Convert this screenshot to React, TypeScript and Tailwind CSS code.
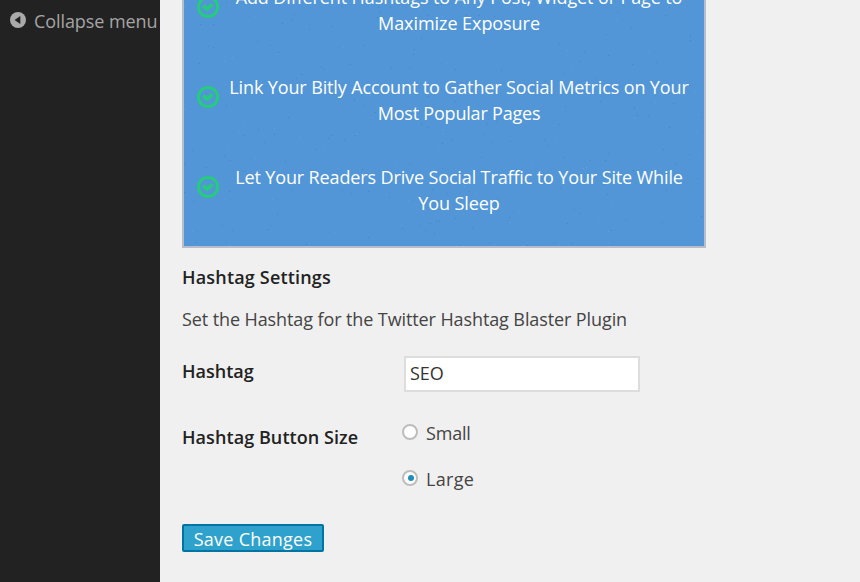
const features = [
  [
    { text: "Add Different Hashtags to Any Post, Widget or Page to", className: "tracking-[-0.11px]" },
    { text: "Maximize Exposure", className: "tracking-[-0.06px]" },
  ],
  [
    { text: "Link Your Bitly Account to Gather Social Metrics on Your", className: "tracking-[-0.13px]" },
    { text: "Most Popular Pages", className: "tracking-[-0.2px]" },
  ],
  [
    { text: "Let Your Readers Drive Social Traffic to Your Site While", className: "tracking-[-0.13px]" },
    { text: "You Sleep", className: "tracking-[-0.1px]" },
  ],
];

const specks = Array.from({ length: 260 }, (_, i) => ({
  x: Math.floor((((Math.sin(i * 12.9898) * 43758.5453) % 1) + 1) * 520) % 520,
  y: Math.floor((((Math.sin(i * 78.233 + 4) * 24634.6345) % 1) + 1) * 246) % 246,
  dark: i % 3 !== 0,
}));

function Check() {
  return (
    <svg viewBox="0 0 24 24" className="size-6 shrink-0" fill="none" stroke="#25cc7c">
      <circle cx="12" cy="12" r="9.6" strokeWidth="3" />
      <path d="M7.2 10.8 11 14 16.6 9.4" strokeWidth="3.8" />
    </svg>
  );
}

function Radio({ label, checked, className }: { label: string; checked?: boolean; className: string }) {
  return (
    <label className="flex h-[26px] items-center">
      <span className="mb-[3px] flex size-4 items-center justify-center rounded-full border-2 border-[#bdbdbd] bg-white">
        {checked && <span className="mt-px ml-px size-1.5 rounded-full bg-[#1e8cbe]" />}
      </span>
      <span className={`ml-2 ${className}`}>{label}</span>
    </label>
  );
}

export default function App() {
  return (
    <div className="flex h-[582px] w-[860px] overflow-hidden bg-[#f0f0f0] font-['Open_Sans',sans-serif] text-[18px] leading-[26px] whitespace-nowrap text-[#444]">
      <aside className="w-40 shrink-0 bg-[#222] pt-2 text-[#a5a5a5]">
        <div className="flex h-[26px] items-center pl-2.5">
          <svg viewBox="0 0 16 16" className="mb-0.5 size-4 shrink-0">
            <circle cx="8" cy="8" r="8" fill="#aaa" />
            <path d="M10.3 4v8L4.6 8z" fill="#222" />
          </svg>
          <span className="ml-2 tracking-[-0.08px]">Collapse menu</span>
        </div>
      </aside>
      <main className="flex w-[700px] flex-col pl-[22px]">
        <section className="flex h-[248px] w-[524px] shrink-0 flex-col justify-end overflow-hidden border-2 border-t-0 border-[#b9bdc8] bg-[#5296d8]">
          <div className="grid">
            <svg className="col-start-1 row-start-1 h-[246px] w-[520px] self-end" viewBox="0 0 520 246">
              {specks.map((s, i) => (
                <rect key={i} x={s.x} y={s.y} width="1" height="1" fill={s.dark ? "#3f80c0" : "#65a4df"} opacity="0.75" />
              ))}
            </svg>
            <ul className="col-start-1 row-start-1 flex flex-col gap-[38px] self-end pb-[30px] text-white">
              {features.map((lines, i) => (
                <li key={i} className="flex h-[52px] items-center pl-3">
                  <span className="pb-1.5">
                    <Check />
                  </span>
                  <span className="flex w-[478px] flex-col items-center">
                    {lines.map((l) => (
                      <span key={l.text} className={l.className}>{l.text}</span>
                    ))}
                  </span>
                </li>
              ))}
            </ul>
          </div>
        </section>
        <h3 className="mt-4 font-semibold tracking-[0.18px] text-[#222]">Hashtag Settings</h3>
        <p className="mt-4 tracking-[-0.1px]">Set the Hashtag for the Twitter Hashtag Blaster Plugin</p>
        <div className="mt-6 flex h-9">
          <label className="w-[222px] pt-0.5 font-semibold text-[#222]">Hashtag</label>
          <input
            className="h-9 w-[236px] border-2 border-[#ddd] bg-white px-1 pb-0.5 text-[#333] outline-none"
            defaultValue="SEO"
          />
        </div>
        <div className="mt-7 flex">
          <span className="w-[220px] pt-1 font-semibold tracking-[0.07px] text-[#222]">Hashtag Button Size</span>
          <div className="flex flex-col gap-5">
            <Radio label="Small" className="tracking-[-0.2px]" />
            <Radio label="Large" className="tracking-[0.3px]" checked />
          </div>
        </div>
        <button className="mt-8 flex h-7 w-[142px] items-center justify-center rounded-[2px] border-2 border-[#0074a2] bg-[#2ea2cc] pt-0.5 tracking-[0.25px] text-white">
          Save Changes
        </button>
      </main>
    </div>
  );
}
